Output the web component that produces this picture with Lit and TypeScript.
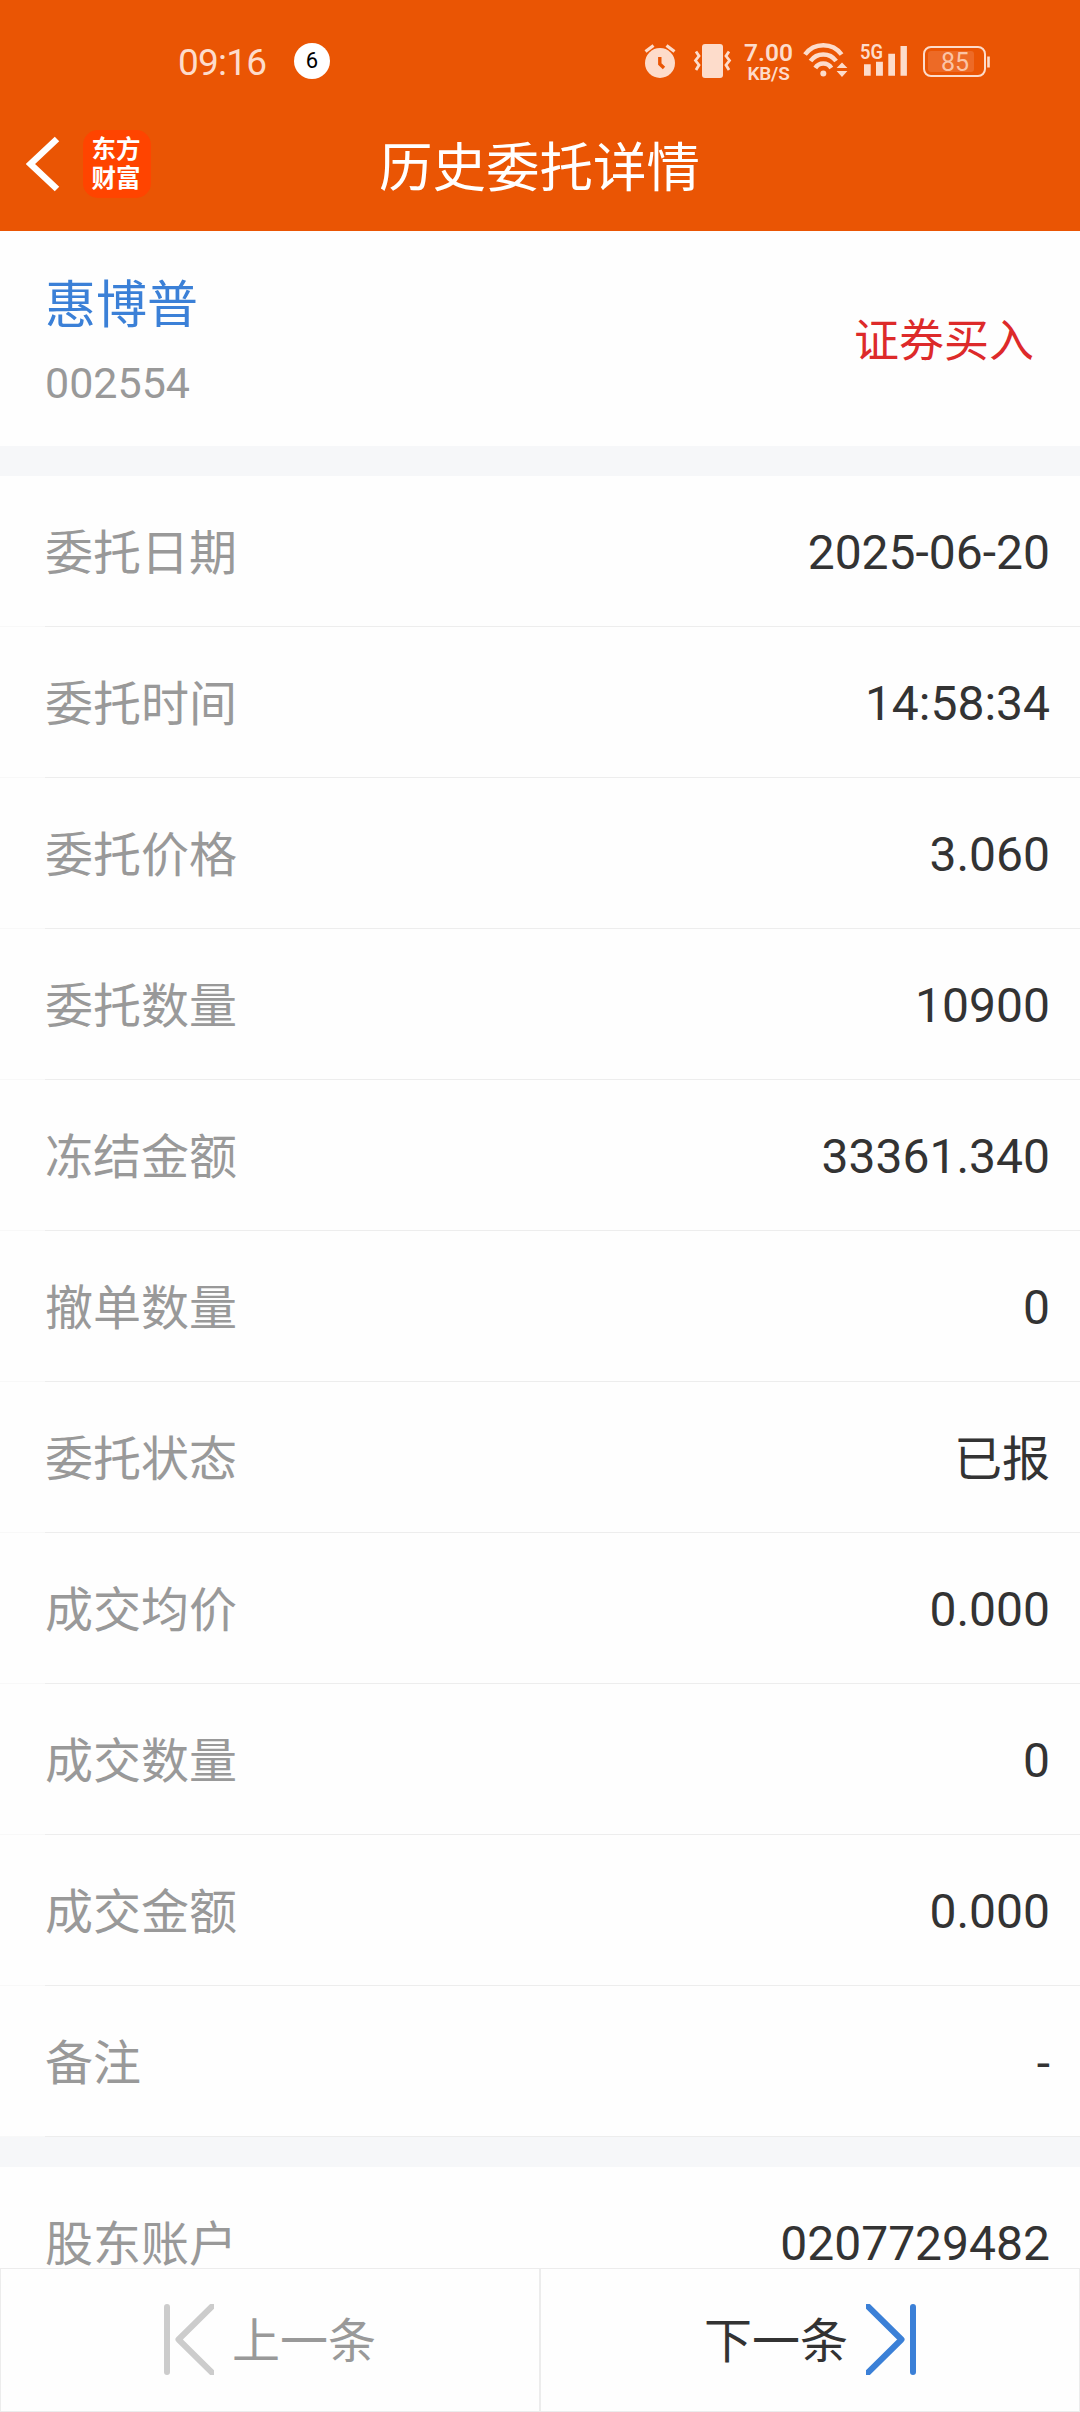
import { LitElement, html, css } from "lit";
import { customElement, property } from "lit/decorators.js";

const INK = "#fddccb";

@customElement("status-bar")
class StatusBar extends LitElement {
  static styles = css`
    :host { display: block; }
    .bar { display: flex; align-items: flex-start; height: 100px; padding: 0 88px 0 178px; box-sizing: border-box; color: #fddccb; }
    .time { font-size: 37px; line-height: 44px; width: 90px; margin-top: 41px; letter-spacing: -0.8px; white-space: nowrap; }
    .badge { width: 36px; height: 36px; margin: 43px 0 0 26px; border-radius: 50%; background: #fff; color: #000; font-size: 22px; line-height: 36px; text-align: center; }
    .icons { display: flex; margin: 41px 0 0 auto; height: 40px; }
    .icons svg { display: block; overflow: visible; }
    .alarm { margin-right: 14px; }
    .vibrate { margin-right: 10px; }
    .speed { width: 51px; margin-right: 8px; text-align: center; font-weight: 600; white-space: nowrap; }
    .rate { font-size: 24.5px; line-height: 24px; height: 22px; }
    .unit { font-size: 19px; line-height: 21px; letter-spacing: -0.2px; }
    .wifi { margin-right: 10px; }
    .signal { margin-right: 14px; }
    text { font-family: Roboto, sans-serif; }
  `;
  render() {
    return html`
      <div class="bar">
        <div class="time">09:16</div>
        <div class="badge">6</div>
        <div class="icons">
          <svg class="alarm" width="36" height="40" viewBox="1 0 36 40">
            <circle cx="18" cy="22" r="15" fill=${INK} />
            <path d="M3.500 10.500 11.500 4.500M32.500 10.500 24.500 4.500" stroke=${INK} stroke-width="3.200" fill="none" />
            <path d="M17.800 16V23L22 27" stroke="#ea5504" stroke-width="3.400" fill="none" />
          </svg>
          <svg class="vibrate" width="40" height="40" viewBox="1 0 40 40">
            <rect x="10" y="3" width="21" height="34" rx="3" fill=${INK} />
            <path d="M4 10.500 7 15 3.500 19.500 7 24 4 29M37 10.500 34 15 37.500 19.500 34 24 37 29" stroke=${INK} stroke-width="2.800" fill="none" />
          </svg>
          <div class="speed"><div class="rate">7.00</div><div class="unit">KB/S</div></div>
          <svg class="wifi" width="48" height="40" viewBox="0 0 48 40">
            <path d="M3 13.500A22.600 22.600 0 0 1 39.600 13.500M8.500 20A15.800 15.800 0 0 1 34.100 20M13.300 27A9.400 9.400 0 0 1 29.300 27" stroke=${INK} stroke-width="4.500" fill="none" />
            <circle cx="21.300" cy="32.400" r="3" fill=${INK} />
            <path d="M34.600 27 40 21.500 45.400 27ZM34.600 30 40 36 45.400 30Z" fill=${INK} />
          </svg>
          <svg class="signal" width="48" height="40" viewBox="0 0 48 40">
            <text x="0" y="18.200" font-size="20.500" font-weight="600" textLength="23" lengthAdjust="spacingAndGlyphs" fill=${INK}>5G</text>
            <path d="M4 23.300h6.700v11.400h-6.700zM16 20.700h6.900v14h-6.900zM28.300 12.700h6.700v22h-6.700zM40.500 5h6.400v29.700h-6.400z" fill=${INK} />
          </svg>
          <svg class="battery" width="70" height="40" viewBox="0 0 70 40">
            <rect x="2" y="6" width="61" height="29" rx="7" stroke=${INK} stroke-width="2" fill="none" />
            <rect x="6" y="10" width="46" height="21" rx="3" fill="#f08047" opacity=".5" />
            <path d="M66.500 15.500v11" stroke=${INK} stroke-width="2.600" />
            <text x="33" y="29.500" font-size="25" text-anchor="middle" fill="#fbc4a6">85</text>
          </svg>
        </div>
      </div>
    `;
  }
}

@customElement("detail-row")
class DetailRow extends LitElement {
  @property() label = "";
  @property() value = "";
  static styles = css`
    :host { display: block; }
    .row { display: flex; flex-direction: column; height: 151px; }
    .line { flex: 1; display: flex; align-items: center; justify-content: space-between; padding: 5px 30px 0 45px; font-size: 48px; line-height: 60px; }
    .label { color: #999; }
    .value { color: #333; }
    .number { padding-bottom: 1px; }
    .rule { height: 1px; background: linear-gradient(to right, #f8f8f8 45px, #ededed 45px); }
  `;
  render() {
    const kind = /\d/.test(this.value) ? "value number" : "value";
    return html`
      <div class="row">
        <div class="line"><span class="label">${this.label}</span><span class=${kind}>${this.value}</span></div>
        <div class="rule"></div>
      </div>
    `;
  }
}

@customElement("app-root")
class AppRoot extends LitElement {
  rows: [string, string][] = [
    ["委托日期", "2025-06-20"],
    ["委托时间", "14:58:34"],
    ["委托价格", "3.060"],
    ["委托数量", "10900"],
    ["冻结金额", "33361.340"],
    ["撤单数量", "0"],
    ["委托状态", "已报"],
    ["成交均价", "0.000"],
    ["成交数量", "0"],
    ["成交金额", "0.000"],
    ["备注", "-"],
  ];
  static styles = css`
    :host { display: flex; flex-direction: column; width: 1080px; height: 2412px; overflow: hidden; background: #fefefe; font-family: Roboto, "Noto Sans CJK SC", sans-serif; }
    .head { flex: none; height: 231px; background: #ea5504; }
    .nav { display: grid; grid-template-columns: 340px 1fr 340px; align-items: center; height: 131px; }
    .left { display: flex; align-items: center; padding: 0 0 4px 26px; }
    .back { display: block; margin-right: 23px; }
    .logo { width: 68px; height: 68px; box-sizing: border-box; border-radius: 15px; background: #ff4400; color: #fff; padding: 5px 2px 0 0; font-size: 24.5px; line-height: 29px; font-weight: 700; text-align: center; white-space: nowrap; }
    .title { color: #fff; font-size: 53.5px; line-height: 64px; padding-top: 7px; margin-left: -1px; text-align: center; white-space: nowrap; }
    .stock { flex: none; display: flex; justify-content: space-between; align-items: center; height: 215px; box-sizing: border-box; padding: 7px 46px 0 45px; }
    .name { color: #3b80d7; font-size: 51px; line-height: 58px; }
    .code { color: #999; font-size: 43px; line-height: 50px; margin-top: 23px; }
    .side { color: #dd2a2a; font-size: 45px; line-height: 54px; }
    .gap { flex: none; height: 30px; background: #f6f7f9; }
    .list { flex: none; }
    .rest { flex: 1; min-height: 0; overflow: hidden; }
    .pager { flex: none; display: grid; grid-template-columns: 1fr 1fr; height: 144px; background: #fefefe; }
    .page { display: flex; align-items: center; border: 1px solid #ececec; font-size: 48px; line-height: 60px; box-sizing: border-box; }
    .page svg { display: block; margin-bottom: 1px; }
    .page span { padding-top: 4px; }
    .prev { color: #999; padding-left: 163px; gap: 18px; }
    .next { color: #333; padding-left: 163px; gap: 18px; }
  `;
  render() {
    return html`
      <div class="head">
        <status-bar></status-bar>
        <div class="nav">
          <div class="left">
            <svg class="back" width="34" height="58" viewBox="0 0 34 58">
              <path d="M31 4 4.500 29 31 54" stroke="#fff" stroke-width="6.500" fill="none" />
            </svg>
            <div class="logo">东方<br />财富</div>
          </div>
          <div class="title">历史委托详情</div>
        </div>
      </div>
      <div class="stock">
        <div><div class="name">惠博普</div><div class="code">002554</div></div>
        <div class="side">证券买入</div>
      </div>
      <div class="gap"></div>
      <div class="list">
        ${this.rows.map(([l, v]) => html`<detail-row .label=${l} .value=${v}></detail-row>`)}
      </div>
      <div class="gap"></div>
      <div class="rest"><detail-row label="股东账户" value="0207729482"></detail-row></div>
      <div class="pager">
        <div class="page prev">
          <svg width="50" height="71" viewBox="0 0 50 71">
            <path d="M3 3V68M48 2.500 14.500 35.500 48 68.500" stroke="#ccc" stroke-width="6" stroke-linecap="round" stroke-linejoin="round" fill="none" />
          </svg>
          <span>上一条</span>
        </div>
        <div class="page next">
          <span>下一条</span>
          <svg width="50" height="71" viewBox="0 0 50 71">
            <path d="M47 3V68M2 2.500 35.500 35.500 2 68.500" stroke="#3b80d7" stroke-width="6" stroke-linecap="round" stroke-linejoin="round" fill="none" />
          </svg>
        </div>
      </div>
    `;
  }
}
